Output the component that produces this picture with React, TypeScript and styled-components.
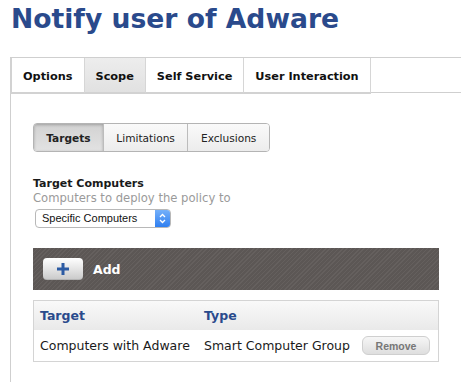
import React from 'react';
import styled, { createGlobalStyle } from 'styled-components';

const Global = createGlobalStyle`
  html, body { margin: 0; padding: 0; background: #fff; }
  body { font-family: "DejaVu Sans", "Liberation Sans", sans-serif; color: #111; }
`;

const Page = styled.div`
  width: 461px;
  height: 382px;
  overflow: hidden;
  padding-left: 10px;
  box-sizing: border-box;
`;

const Title = styled.h1`
  margin: 0;
  height: 57px;
  padding-left: 1px;
  font-size: 26.6px;
  line-height: 37px;
  font-weight: bold;
  color: #2a4a8c;
`;

const TabBar = styled.div`
  display: flex;
  border-top: 1px solid #cfcfcf;
  height: 36px;
`;

const Tab = styled.div<{ $active?: boolean }>`
  display: flex;
  align-items: center;
  padding: 3px 11px 0 11px;
  font-size: 11.3px;
  font-weight: bold;
  color: #111;
  border-right: 1px solid #d6d6d6;
  border-bottom: 2px solid #d2d2d2;
  background: ${p => (p.$active ? 'linear-gradient(#ededed, #e1e1e1)' : '#fff')};
  &:first-child { border-left: 2px solid #d2d2d2; }
  &:last-child { border-right: 2px solid #d2d2d2; }
`;

const TabRest = styled.div`
  flex: 1;
  border-bottom: 1px solid #cfcfcf;
  margin-bottom: 1px;
`;

const Panel = styled.div`
  border-left: 1px solid #cfcfcf;
  height: 300px;
  padding: 29px 0 0 22px;
  box-sizing: border-box;
`;

const Segmented = styled.div`
  display: flex;
  width: 237px;
  height: 29px;
  border: 1px solid #b4b4b4;
  border-radius: 4px;
  overflow: hidden;
  box-sizing: border-box;
`;

const Segment = styled.div<{ $w: number; $active?: boolean }>`
  width: ${p => p.$w}px;
  display: flex;
  align-items: center;
  justify-content: center;
  font-size: 10.6px;
  font-weight: ${p => (p.$active ? 'bold' : 'normal')};
  color: #222;
  background: ${p => (p.$active ? 'linear-gradient(#d2d2d2, #e2e2e2)' : 'linear-gradient(#fafafa, #ececec)')};
  box-shadow: ${p => (p.$active ? 'inset 0 1px 3px rgba(0,0,0,0.25)' : 'none')};
  & + & { border-left: 1px solid #bcbcbc; }
`;

const FieldLabel = styled.div`
  margin-top: 25px;
  font-size: 11px;
  font-weight: bold;
  line-height: 14px;
  color: #1a1a1a;
`;

const FieldHint = styled.div`
  font-size: 11.6px;
  line-height: 15px;
  color: #9a9a9a;
`;

const Select = styled.div`
  margin: 3px 0 0 2px;
  width: 136px;
  height: 19px;
  display: flex;
  border: 1px solid #b8b8b8;
  border-radius: 4px;
  box-sizing: border-box;
  overflow: hidden;
  background: #fff;
`;

const SelectText = styled.div`
  flex: 1;
  font-family: "Liberation Sans", Arial, sans-serif;
  font-size: 11px;
  line-height: 17px;
  padding-left: 6px;
  color: #111;
`;

const SelectArrow = styled.div`
  width: 15px;
  display: flex;
  align-items: center;
  justify-content: center;
  background: linear-gradient(#74b0fa, #2f7ff0);
`;

const ActionBar = styled.div`
  margin-top: 20px;
  width: 406px;
  height: 42px;
  display: flex;
  align-items: center;
  gap: 10px;
  padding-left: 10px;
  box-sizing: border-box;
  background: repeating-linear-gradient(135deg, #65605e 0 1px, #5c5755 1px 3px);
`;

const AddButton = styled.div`
  width: 40px;
  height: 22px;
  border-radius: 4px;
  display: flex;
  align-items: center;
  justify-content: center;
  background: linear-gradient(#ffffff, #c9c9c9);
  box-shadow: inset 0 -1px 0 rgba(0,0,0,0.1);
`;

const AddLabel = styled.span`
  color: #fff;
  font-size: 12.5px;
  font-weight: bold;
`;

const Table = styled.div`
  margin-top: 10px;
  width: 406px;
  border: 1px solid #d4d4d4;
  box-sizing: border-box;
`;

const Row = styled.div<{ $head?: boolean }>`
  display: grid;
  grid-template-columns: 164px 158px 1fr;
  align-items: center;
  height: ${p => (p.$head ? 29 : 31)}px;
  padding-left: 6px;
  font-size: 12.5px;
  font-weight: ${p => (p.$head ? 'bold' : 'normal')};
  color: ${p => (p.$head ? '#2a4a8c' : '#1a1a1a')};
  background: ${p => (p.$head ? 'linear-gradient(#f9f9f9, #e9e9e9)' : '#fff')};
`;

const RemoveButton = styled.div`
  width: 68px;
  height: 19px;
  border: 1px solid #cfcfcf;
  border-radius: 6px;
  box-sizing: border-box;
  display: flex;
  align-items: center;
  justify-content: center;
  font-family: "Liberation Sans", Arial, sans-serif;
  font-size: 10.5px;
  font-weight: bold;
  color: #777;
  background: linear-gradient(#f6f6f6, #dedede);
`;

const tabs = [
  { label: 'Options' },
  { label: 'Scope', active: true },
  { label: 'Self Service' },
  { label: 'User Interaction' },
];

const segments = [
  { label: 'Targets', w: 70, active: true },
  { label: 'Limitations', w: 85 },
  { label: 'Exclusions', w: 82 },
];

export default function App() {
  return (
    <Page>
      <Global />
      <Title>Notify user of Adware</Title>
      <TabBar>
        {tabs.map(t => (
          <Tab key={t.label} $active={t.active}>{t.label}</Tab>
        ))}
        <TabRest />
      </TabBar>
      <Panel>
        <Segmented>
          {segments.map(s => (
            <Segment key={s.label} $w={s.w} $active={s.active}>{s.label}</Segment>
          ))}
        </Segmented>
        <FieldLabel>Target Computers</FieldLabel>
        <FieldHint>Computers to deploy the policy to</FieldHint>
        <Select>
          <SelectText>Specific Computers</SelectText>
          <SelectArrow>
            <svg width="7" height="11" viewBox="0 0 7 11">
              <path d="M1 4 L3.5 1.5 L6 4 M1 7 L3.5 9.5 L6 7" stroke="#fff" strokeWidth="1.3" fill="none" />
            </svg>
          </SelectArrow>
        </Select>
        <ActionBar>
          <AddButton>
            <svg width="14" height="14" viewBox="0 0 14 14">
              <path d="M7 1 V13 M1 7 H13" stroke="#2c5ba3" strokeWidth="3" />
            </svg>
          </AddButton>
          <AddLabel>Add</AddLabel>
        </ActionBar>
        <Table>
          <Row $head>
            <span>Target</span>
            <span>Type</span>
            <span />
          </Row>
          <Row>
            <span>Computers with Adware</span>
            <span>Smart Computer Group</span>
            <RemoveButton>Remove</RemoveButton>
          </Row>
        </Table>
      </Panel>
    </Page>
  );
}
